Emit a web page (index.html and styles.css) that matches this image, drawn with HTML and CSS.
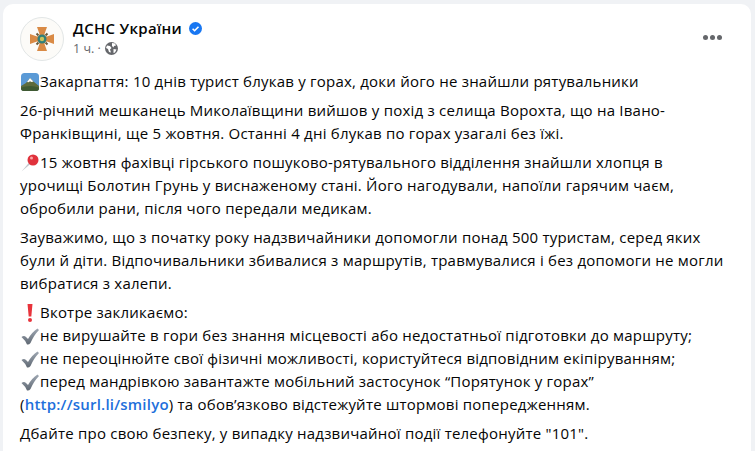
FILE: index.html
```
<!DOCTYPE html>
<html lang="uk">
<head>
<meta charset="utf-8">
<title>ДСНС України</title>
<link rel="stylesheet" href="styles.css">
</head>
<body>
<svg class="defs" width="0" height="0" aria-hidden="true">
  <defs>
    <linearGradient id="chk" x1="0" y1="0" x2="0" y2="1"><stop offset="0" stop-color="#9fa8b3"/><stop offset="1" stop-color="#5f6873"/></linearGradient>
    <symbol id="check" viewBox="0 0 18 18"><path d="M.5 10q2.500-2 4.500 0l2 2q4-7 9.500-10.500l1.500 1.500q-5 5-8.500 13-1.500 2-3.500 1.500-1.500-4-5.500-7.500z" fill="url(#chk)"/></symbol>
  </defs>
</svg>
<article class="card">
  <header class="head">
    <div class="avatar">
      <svg width="24" height="24" viewBox="0 0 24 24">
        <path d="M7 0h10l-2.500 7 .5 2 2 .5 7-2.500v10l-7-2.500-2 .5-.5 2 2.500 7H7l2.500-7-.5-2-2-.5-7 2.500V7l7 2.500 2-.5 .5-2z" fill="#d98a45"/>
        <path d="M6.500 6.500l2 2M17.500 6.500l-2 2M6.500 17.500l2-2M17.500 17.500l-2-2" stroke="#6b5a3a" stroke-width="2"/>
        <circle cx="12" cy="12" r="4.500" fill="#2f7f7a"/>
        <circle cx="12" cy="12" r="2.200" fill="#c9c25a"/>
      </svg>
    </div>
    <div class="meta">
      <div class="name-row">
        <span class="name">ДСНС України</span>
        <svg class="badge" width="13" height="13" viewBox="0 0 13 13">
          <circle cx="6.5" cy="6.5" r="6.5" fill="#1877f2"/>
          <path d="M3.6 6.7l2 2 3.9-4" fill="none" stroke="#fff" stroke-width="1.6"/>
        </svg>
      </div>
      <div class="time-row">
        <span>1 ч. ·</span>
        <svg width="13" height="13" viewBox="0 0 13 13">
          <circle cx="6.5" cy="6.5" r="6.5" fill="#65676b"/>
          <path d="M2 3.500l3 .5 1.500 2-1.500 1.500 1 3-2-.5-1-3-2-1zM7 1l3 .5 1 2-2 .5-.5 1.500-1.500-1.500zM8.500 7l3 .5-1.500 3-1.500.5z" fill="#fff"/>
        </svg>
      </div>
    </div>
    <div class="more" aria-label="Більше"><i></i><i></i><i></i></div>
  </header>
  <div class="body">
    <p><svg class="emoji" viewBox="0 0 18 18"><rect width="18" height="18" rx="3.500" fill="#5b9ad6"/><path d="M0 13l5-3 4-5 4 4 5 4v2a3 3 0 0 1-3 3H3a3 3 0 0 1-3-3z" fill="#5d6b3c"/><path d="M6 9l3-4 3.500 3.500-2 .5-1.500-.8-1.500 1z" fill="#fff"/><path d="M0 14.500q9-3 18 0V15a3 3 0 0 1-3 3H3a3 3 0 0 1-3-3z" fill="#3f5a33"/></svg><span class="gap">Закарпаття: 10 днів турист блукав у горах, доки його не знайшли рятувальники</span></p>
    <p>26-річний мешканець Миколаївщини вийшов у похід з селища Ворохта, що на Івано-<br>Франківщині, ще 5 жовтня. Останні 4 дні блукав по горах узагалі без їжі.</p>
    <p><svg class="emoji" viewBox="0 0 18 18"><path d="M.5 17.500L9 7.500l1.500 1.500z" fill="#c2c6cc"/><circle cx="12" cy="6" r="5.500" fill="#e0323c"/><circle cx="10.500" cy="4" r="1.500" fill="#f9a5a5"/></svg><span class="gap">15 жовтня фахівці гірського пошуково-рятувального відділення знайшли хлопця в</span><br>урочищі Болотин Грунь у виснаженому стані. Його нагодували, напоїли гарячим чаєм,<br>обробили рани, після чого передали медикам.</p>
    <p>Зауважимо, що з початку року надзвичайники допомогли понад 500 туристам, серед яких<br>були й діти. Відпочивальники збивалися з маршрутів, травмувалися і без допомоги не могли<br>вибратися з халепи.</p>
    <p><svg class="emoji" viewBox="0 0 18 18"><path d="M6.500 0h5l-1.200 12.500H7.700z" fill="#e8343c"/><circle cx="9" cy="16" r="2" fill="#e8343c"/></svg><span class="gap">Вкотре закликаємо:</span><br>
    <svg class="emoji"><use href="#check"/></svg><span class="gap">не вирушайте в гори без знання місцевості або недостатньої підготовки до маршруту;</span><br>
    <svg class="emoji"><use href="#check"/></svg><span class="gap">не переоцінюйте свої фізичні можливості, користуйтеся відповідним екіпіруванням;</span><br>
    <svg class="emoji"><use href="#check"/></svg><span class="gap">перед мандрівкою завантажте мобільний застосунок “Порятунок у горах”</span><br>
    (<a href="#">http://surl.li/smilyo</a>) та обов’язково відстежуйте штормові попередженням.</p>
    <p>Дбайте про свою безпеку, у випадку надзвичайної події телефонуйте "101".</p>
  </div>
</article>
</body>
</html>
```
FILE: styles.css
```
html, body { margin: 0; padding: 0; height: 451px; overflow: hidden; }
body { background: #f0f2f5; font-family: "Open Sans", "Noto Sans", sans-serif; color: #050505; }
.defs { display: block; height: 0; }
.card { margin: 4px 4px 0 3px; background: #fff; border-radius: 10px 10px 0 0; height: 460px; overflow: hidden; }
.head { display: flex; align-items: flex-start; padding: 13px 29px 0 17px; }
.avatar { width: 44px; height: 44px; border-radius: 50%; border: 1px solid #e2e6e6; background: #fcfbf8; display: flex; align-items: center; justify-content: center; box-sizing: border-box; }
.meta { margin-left: 9px; flex: 1; }
.name-row { display: flex; align-items: center; gap: 7px; height: 22px; }
.name { font-size: 15px; font-weight: 600; letter-spacing: 0.3px; }
.time-row { display: flex; align-items: center; gap: 4px; font-size: 12.5px; color: #65676b; height: 18px; }
.more { display: flex; gap: 2px; padding: 18px 0 0; }
.more i { width: 5px; height: 5px; border-radius: 50%; background: #65676b; }
.body { padding: 9px 0 0 17px; font-size: 15px; line-height: 23px; white-space: nowrap; letter-spacing: 0.22px; }
.body p { margin: 0 0 6px; }
.emoji { vertical-align: -4px; width: 18px; height: 18px; margin-left: 1px; }
.gap { margin-left: 1px; }
a { color: #216fdb; font-weight: 600; text-decoration: none; }
```
